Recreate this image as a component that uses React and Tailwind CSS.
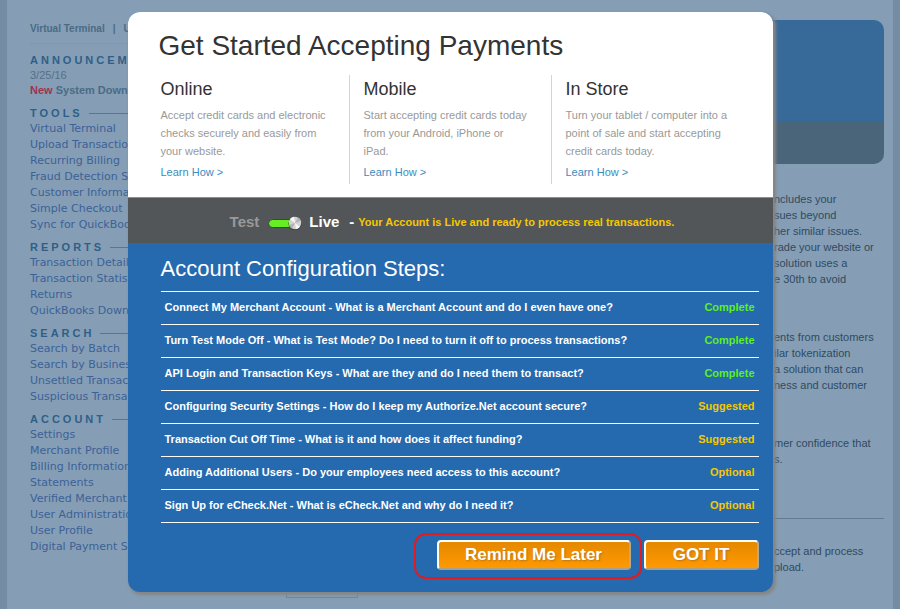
import React from "react";

const menus = [
  {
    title: "TOOLS",
    items: [
      "Virtual Terminal",
      "Upload Transaction",
      "Recurring Billing",
      "Fraud Detection Su",
      "Customer Informa",
      "Simple Checkout",
      "Sync for QuickBoo",
    ],
  },
  {
    title: "REPORTS",
    items: ["Transaction Detail", "Transaction Statist", "Returns", "QuickBooks Downl"],
  },
  {
    title: "SEARCH",
    items: ["Search by Batch", "Search by Busines", "Unsettled Transact", "Suspicious Transac"],
  },
  {
    title: "ACCOUNT",
    items: [
      "Settings",
      "Merchant Profile",
      "Billing Information",
      "Statements",
      "Verified Merchant S",
      "User Administratio",
      "User Profile",
      "Digital Payment So",
    ],
  },
];

const channels = [
  { title: "Online", text: "Accept credit cards and electronic checks securely and easily from your website." },
  { title: "Mobile", text: "Start accepting credit cards today from your Android, iPhone or iPad." },
  { title: "In Store", text: "Turn your tablet / computer into a point of sale and start accepting credit cards today." },
];

const steps = [
  ["Connect My Merchant Account - What is a Merchant Account and do I even have one?", "Complete"],
  ["Turn Test Mode Off - What is Test Mode? Do I need to turn it off to process transactions?", "Complete"],
  ["API Login and Transaction Keys - What are they and do I need them to transact?", "Complete"],
  ["Configuring Security Settings - How do I keep my Authorize.Net account secure?", "Suggested"],
  ["Transaction Cut Off Time - What is it and how does it affect funding?", "Suggested"],
  ["Adding Additional Users - Do your employees need access to this account?", "Optional"],
  ["Sign Up for eCheck.Net - What is eCheck.Net and why do I need it?", "Optional"],
];

function Sidebar() {
  return (
    <aside className="w-[240px] shrink-0 whitespace-nowrap pt-[21px] text-[11px]">
      <nav className="flex gap-2 border-b border-[#7b97b1] pb-1.5 text-[10px] font-bold leading-4 text-[#4b6b85]">
        <a href="#terminal">Virtual Terminal</a>
        <span>|</span>
        <a href="#upload">U</a>
      </nav>
      <section className="pb-px pt-2 leading-[15px]">
        <h2 className="font-bold leading-4 tracking-[3px] text-[#2f5f88]">ANNOUNCEM</h2>
        <p className="text-[#566f85]">3/25/16</p>
        <p className="font-bold text-[#4b6b85]">
          <span className="text-[#a03350]">New</span> System Down
        </p>
      </section>
      {menus.map((menu) => (
        <section key={menu.title} className="pt-1.5 leading-4">
          <h2 className="flex items-center gap-1.5 font-bold leading-4 tracking-[3px] text-[#2f5f88]">
            {menu.title}
            <span className="h-px flex-1 bg-[#487aa6]" />
          </h2>
          <ul className="font-['DejaVu_Sans',sans-serif] text-[#3c6197]">
            {menu.items.map((item) => (
              <li key={item}>
                <a href="#menu">{item}</a>
              </li>
            ))}
          </ul>
        </section>
      ))}
    </aside>
  );
}

function Notice({ lines, className }) {
  return (
    <p className={className}>
      {lines.map((line) => (
        <span key={line} className="block">
          {line}
        </span>
      ))}
    </p>
  );
}

function Content() {
  return (
    <main className="min-w-0 flex-1 pt-5 text-[11px] leading-4 text-[#2f4a61]">
      <div className="overflow-hidden rounded-[10px]">
        <div className="h-[101px] bg-[#376a99]" />
        <div className="h-[43px] bg-[#4a6479]" />
      </div>
      <div className="ml-auto w-[110px] whitespace-nowrap">
        <Notice
          className="pt-[27px]"
          lines={["ncludes your", "sues beyond", "her similar issues.", "rade your website or", "solution uses a", "e 30th to avoid"]}
        />
        <Notice className="pt-[42px]" lines={["ents from customers", "ilar tokenization", "a solution that can", "ness and customer"]} />
        <Notice className="pt-[42px]" lines={["mer confidence that", "s."]} />
      </div>
      <hr className="mt-[51px] border-[#5f7d8f]" />
      <div className="ml-auto w-[110px] whitespace-nowrap">
        <Notice className="pt-6" lines={["ccept and process", "pload."]} />
      </div>
      <div className="ml-4 mt-1 h-[19px] w-[72px] border border-[#6f879b]" />
    </main>
  );
}

function ModeSwitch() {
  return (
    <span className="relative flex items-center">
      <input
        id="live-mode"
        type="checkbox"
        role="switch"
        defaultChecked
        className="absolute inset-0 size-full cursor-pointer opacity-0"
      />
      <svg width="36" height="16" viewBox="0 0 36 16" aria-hidden="true">
        <rect x="1.5" y="4.5" width="30" height="8" rx="4" fill="#66ee22" stroke="#3d4143" />
        <circle cx="28" cy="8.6" r="6.6" fill="#3b3e40" />
        <circle cx="28" cy="8" r="6.2" fill="#d2d2d2" />
        <path d="M28 8 23 4.2A6.3 6.3 0 0 1 27 1.8ZM28 8l5 3.8a6.3 6.3 0 0 1-4 2.4Z" fill="#f6f6f6" />
        <path d="M28 8l3-5.5a6.3 6.3 0 0 1 3 3.5ZM28 8l-3 5.5a6.3 6.3 0 0 1-3-3.5Z" fill="#b3b3b3" />
      </svg>
    </span>
  );
}

function statusColor(status) {
  return status === "Complete" ? "text-[#5cf01c]" : "text-[#f5c800]";
}

function ActionButton({ children, className }) {
  return (
    <button
      type="button"
      className={
        "h-[30px] rounded-[4px] border-2 border-b-[#a9a08c] border-l-white border-r-[#b9a88c] border-t-white bg-linear-to-b from-[#e58900] to-[#ff9900] text-[17px] font-bold leading-[26px] text-white [text-shadow:1px_1px_2px_#b87418] " +
        className
      }
    >
      {children}
    </button>
  );
}

function Modal() {
  return (
    <div className="absolute inset-x-0 top-3 px-4">
      <div
        role="dialog"
        aria-labelledby="dialog-title"
        className="mx-auto max-w-[645px] overflow-hidden rounded-[12px] bg-[#2569ae] shadow-[2px_2px_3px_1px_#858585]"
      >
        <section className="bg-white pb-[13px] pl-[33px] pr-[14px] pt-4">
          <h1 id="dialog-title" className="-ml-0.5 text-[28px] leading-9 text-[#333]">
            Get Started Accepting Payments
          </h1>
          <div className="mt-[11px] grid grid-cols-[189fr_202fr_207fr]">
            {channels.map((channel) => (
              <div
                key={channel.title}
                className="border-r border-[#d4d4d4] pb-[3px] pl-[14px] pr-[19px] pt-1 first:pl-0 last:border-r-0"
              >
                <h2 className="text-[18px] leading-5 text-[#333]">{channel.title}</h2>
                <p className="mt-[7px] text-[11px] leading-[18px] text-[#999]">{channel.text}</p>
                <a href="#learn" className="mt-[3px] block text-[11px] leading-[18px] text-[#3a8cc0]">
                  Learn How &gt;
                </a>
              </div>
            ))}
          </div>
        </section>
        <section className="flex h-[46px] items-center justify-center border-t border-[#8d8f90] bg-[#525659] pl-1 pt-1 font-bold">
          <span className="text-[15px] text-[#999]">Test</span>
          <span className="ml-2 mr-1.5">
            <ModeSwitch />
          </span>
          <label htmlFor="live-mode" className="text-[15px] text-white">
            Live
          </label>
          <span className="ml-2.5 mr-1 text-[15px] text-white">-</span>
          <span className="text-[11px] text-[#f5c800]">Your Account is Live and ready to process real transactions.</span>
        </section>
        <section className="pb-[13px] pl-[33px] pr-[14px] pt-3">
          <h2 className="text-[22px] leading-7 text-white">Account Configuration Steps:</h2>
          <table className="mt-2 w-full border-collapse border-t border-white text-[11px] font-bold">
            <tbody>
              {steps.map(([question, status]) => (
                <tr key={question} className="h-[33px] border-b border-white">
                  <td className="pb-0.5 pl-1 text-white">{question}</td>
                  <td className={"pb-0.5 pr-1 text-right " + statusColor(status)}>{status}</td>
                </tr>
              ))}
            </tbody>
          </table>
          <div className="mt-[10px] flex items-start justify-end gap-0.5">
            <div className="rounded-[12px] border-2 border-[#e01b22] pb-[7px] pl-[21px] pr-[9px] pt-[5px]">
              <ActionButton className="w-[194px]">Remind Me Later</ActionButton>
            </div>
            <ActionButton className="mt-[7px] w-[115px]">GOT IT</ActionButton>
          </div>
        </section>
      </div>
    </div>
  );
}

export default function App() {
  return (
    <div className="relative min-h-screen bg-[#748da5] px-[7px] font-['Liberation_Sans',Arial,sans-serif]">
      <div className="flex min-h-screen bg-[#859eb5] pl-[23px] pr-[9px]">
        <Sidebar />
        <Content />
      </div>
      <Modal />
    </div>
  );
}
